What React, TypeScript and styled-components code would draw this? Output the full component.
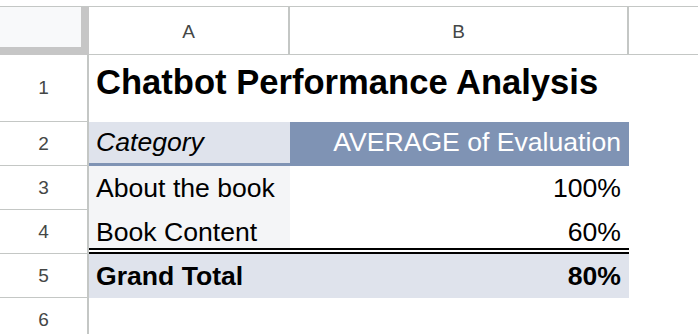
import React, { FC } from "react";
import styled, { createGlobalStyle } from "styled-components";

const GlobalStyle = createGlobalStyle`
  html, body {
    margin: 0;
    padding: 0;
    background: #ffffff;
  }
  body {
    font-family: "Liberation Sans", Arial, sans-serif;
    color: #000000;
  }
`;

const GRID_LINE = "#c4c7c5";
const HEADER_BLUE = "#7f93b4";
const BAND = "#dfe3ec";
const CATEGORY_BG = "#f4f5f7";

const Sheet = styled.div`
  margin-top: 6px;
  border-top: 1px solid ${GRID_LINE};
  display: grid;
  grid-template-columns: 89px 201px 339px 1fr;
  grid-template-rows: 48px 67px repeat(5, 44px);
  width: 698px;
`;

const Corner = styled.div`
  box-sizing: border-box;
  background: #f8f9fa;
  border-right: 8px solid #c6c6c6;
  border-bottom: 8px solid #c6c6c6;
`;

const ColumnHeader = styled.div<{ $last?: boolean }>`
  box-sizing: border-box;
  display: flex;
  align-items: center;
  justify-content: center;
  font-size: 19px;
  color: #444746;
  border-bottom: 1px solid ${GRID_LINE};
  border-right: ${(p) => (p.$last ? "none" : `2px solid ${GRID_LINE}`)};
  padding-top: 2px;
`;

const RowHeader = styled.div`
  box-sizing: border-box;
  display: flex;
  align-items: center;
  justify-content: center;
  font-size: 19px;
  color: #444746;
  border-right: 2px solid ${GRID_LINE};
  border-bottom: 1px solid ${GRID_LINE};
`;

const TitleCell = styled.div`
  grid-column: 2 / span 3;
  font-size: 34.6px;
  font-weight: 700;
  padding: 8px 0 0 7px;
  white-space: nowrap;
`;

type CellProps = {
  $bg?: string;
  $color?: string;
  $align?: "left" | "right";
  $bold?: boolean;
  $italic?: boolean;
  $underline?: string;
  $double?: boolean;
};

// pivot table cell; $double draws the line above the grand total
const Cell = styled.div<CellProps>`
  box-sizing: border-box;
  display: flex;
  align-items: center;
  justify-content: ${(p) => (p.$align === "right" ? "flex-end" : "flex-start")};
  padding: 0 8px 0 7px;
  font-size: 26.6px;
  white-space: nowrap;
  background: ${(p) => p.$bg || "transparent"};
  background-clip: padding-box;
  color: ${(p) => p.$color || "#000000"};
  font-weight: ${(p) => (p.$bold ? 700 : 400)};
  font-style: ${(p) => (p.$italic ? "italic" : "normal")};
  border-bottom: ${(p) =>
    p.$double ? "6px double #000000" : p.$underline ? `3px solid ${p.$underline}` : "none"};
  padding-top: ${(p) => (p.$double ? "6px" : "0")};
`;

const Empty = styled.div``;

type Row = {
  label: string;
  value: string;
};

const rows: Row[] = [
  { label: "About the book", value: "100%" },
  { label: "Book Content", value: "60%" },
];

const App: FC = () => {
  return (
    <>
      <GlobalStyle />
      <Sheet>
        <Corner />
        <ColumnHeader>A</ColumnHeader>
        <ColumnHeader>B</ColumnHeader>
        <ColumnHeader $last />

        <RowHeader>1</RowHeader>
        <TitleCell>Chatbot Performance Analysis</TitleCell>

        <RowHeader>2</RowHeader>
        <Cell $bg={BAND} $italic $underline={HEADER_BLUE}>
          Category
        </Cell>
        <Cell $bg={HEADER_BLUE} $color="#ffffff" $align="right" $underline={HEADER_BLUE}>
          AVERAGE of Evaluation
        </Cell>
        <Empty />

        {rows.map((r, i) => {
          const last = i === rows.length - 1;
          return (
            <React.Fragment key={r.label}>
              <RowHeader>{i + 3}</RowHeader>
              <Cell $bg={CATEGORY_BG} $double={last}>
                {r.label}
              </Cell>
              <Cell $align="right" $double={last}>
                {r.value}
              </Cell>
              <Empty />
            </React.Fragment>
          );
        })}

        <RowHeader>5</RowHeader>
        <Cell $bg={BAND} $bold>
          Grand Total
        </Cell>
        <Cell $bg={BAND} $bold $align="right">
          80%
        </Cell>
        <Empty />

        <RowHeader>6</RowHeader>
        <Empty />
        <Empty />
        <Empty />
      </Sheet>
    </>
  );
};

export default App;
